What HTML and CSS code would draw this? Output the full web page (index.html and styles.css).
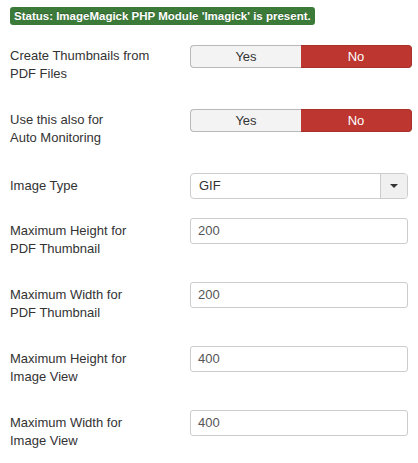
FILE: index.html
```html
<!DOCTYPE html>
<html>
<head>
<meta charset="utf-8">
<link rel="stylesheet" href="styles.css">
</head>
<body>
<div class="page">
  <div class="status">Status: ImageMagick PHP Module 'Imagick' is present.</div>

  <div class="row row-toggle">
    <div class="label">Create Thumbnails from<br>PDF Files</div>
    <div class="toggle">
      <span class="opt opt-yes">Yes</span><span class="opt opt-no">No</span>
    </div>
  </div>

  <div class="row row-toggle">
    <div class="label">Use this also for<br>Auto Monitoring</div>
    <div class="toggle">
      <span class="opt opt-yes">Yes</span><span class="opt opt-no">No</span>
    </div>
  </div>

  <div class="row row-single">
    <div class="label">Image Type</div>
    <div class="select">
      <span class="select-value">GIF</span>
      <span class="select-btn"><span class="caret"></span></span>
    </div>
  </div>

  <div class="row">
    <div class="label">Maximum Height for<br>PDF Thumbnail</div>
    <div class="input">200</div>
  </div>

  <div class="row">
    <div class="label">Maximum Width for<br>PDF Thumbnail</div>
    <div class="input">200</div>
  </div>

  <div class="row">
    <div class="label">Maximum Height for<br>Image View</div>
    <div class="input">400</div>
  </div>

  <div class="row">
    <div class="label">Maximum Width for<br>Image View</div>
    <div class="input">400</div>
  </div>
</div>
</body>
</html>
```

FILE: styles.css
```css
html, body {
  margin: 0;
  padding: 0;
  background: #ffffff;
}

body {
  font-family: "Liberation Sans", Arial, sans-serif;
  font-size: 13px;
  color: #333333;
}

.page {
  padding: 7px 10px 0 10px;
}

.status {
  display: inline-block;
  background: #3c7a3a;
  color: #ffffff;
  font-weight: bold;
  font-size: 11.5px;
  line-height: 14px;
  padding: 2px 4px;
  border-radius: 3px;
  text-shadow: 0 -1px 0 rgba(0, 0, 0, 0.25);
  margin-bottom: 20px;
  white-space: nowrap;
}

.row {
  display: flex;
  align-items: flex-start;
  margin-bottom: 18px;
}

.label {
  width: 180px;
  flex: none;
  line-height: 18px;
  padding-top: 4px;
  padding-bottom: 6px;
}

.row-toggle .label {
  padding-top: 2px;
  padding-bottom: 8px;
}

.row-single .label {
  padding-bottom: 5px;
}

.toggle {
  display: flex;
  width: 222px;
  height: 23px;
}

.opt {
  width: 111px;
  flex: none;
  box-sizing: border-box;
  display: flex;
  align-items: center;
  justify-content: center;
  line-height: 18px;
}

.opt-yes {
  background: #f3f3f3;
  border: 1px solid #b9b9b9;
  border-right: none;
  border-radius: 4px 0 0 4px;
  color: #333333;
}

.opt-no {
  background: #bd362f;
  border: 1px solid #a8302a;
  border-left: none;
  border-radius: 0 4px 4px 0;
  color: #ffffff;
}

.select {
  display: flex;
  width: 219px;
  height: 26px;
  box-sizing: border-box;
  border: 1px solid #cccccc;
  border-radius: 4px;
  overflow: hidden;
}

.select-value {
  flex: 1;
  padding-left: 8px;
  line-height: 24px;
  color: #333333;
}

.select-btn {
  width: 26px;
  flex: none;
  background: #f0f0f0;
  border-left: 1px solid #cccccc;
  display: flex;
  align-items: center;
  justify-content: center;
}

.caret {
  width: 0;
  height: 0;
  border-left: 4px solid transparent;
  border-right: 4px solid transparent;
  border-top: 4px solid #333333;
}

.input {
  width: 219px;
  height: 26px;
  box-sizing: border-box;
  border: 1px solid #cccccc;
  border-radius: 3px;
  padding-left: 7px;
  line-height: 24px;
  color: #555555;
}
```
